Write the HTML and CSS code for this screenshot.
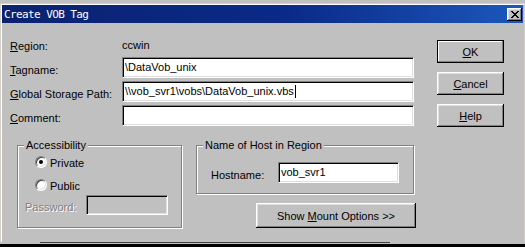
FILE: index.html
```html
<!DOCTYPE html>
<html lang="en">
<head>
    <meta charset="UTF-8">
    <meta name="viewport" content="width=device-width, initial-scale=1.0">
    <title>Create VOB Tag</title>
    <link rel="stylesheet" href="styles.css">
</head>
<body>
    <div class="window">
        <div class="titlebar">
            <span class="title">Create VOB Tag</span>
            <span class="close">
                <svg width="8" height="7" viewBox="0 0 8 7">
                    <path d="M0 0h2v1h1v1h2v-1h1v-1h2v1h-1v1h-1v1h-1v1h1v1h1v1h1v1h-2v-1h-1v-1h-2v1h-1v1h-2v-1h1v-1h1v-1h1v-1h-1v-1h-1v-1h-1z" fill="#000"/>
                </svg>
            </span>
        </div>

        <div class="content">
            <div class="main">
                <div class="fields">
                    <div class="label"><u>R</u>egion:</div>
                    <div class="value">ccwin</div>

                    <div class="label"><u>T</u>agname:</div>
                    <div class="field">\DataVob_unix</div>

                    <div class="label"><u>G</u>lobal Storage Path:</div>
                    <div class="field">\\vob_svr1\vobs\DataVob_unix.vbs<span class="caret"></span></div>

                    <div class="label"><u>C</u>omment:</div>
                    <div class="field"></div>
                </div>

                <div class="groups">
                    <div class="group access">
                        <div class="legend">Accessibility</div>
                        <div class="radio-row first">
                            <span class="radio checked"></span>
                            <span>Private</span>
                        </div>
                        <div class="radio-row">
                            <span class="radio"></span>
                            <span>Public</span>
                        </div>
                        <div class="password-row">
                            <span class="disabled-label">Password:</span>
                            <span class="field disabled"></span>
                        </div>
                    </div>

                    <div class="right-col">
                        <div class="group host">
                            <div class="legend">Name of Host in Region</div>
                            <div class="host-row">
                                <span class="host-label">Hostname:</span>
                                <span class="field host-field">vob_svr1</span>
                            </div>
                        </div>
                        <button class="btn mount">Show <u>M</u>ount Options &gt;&gt;</button>
                    </div>
                </div>
            </div>

            <div class="actions">
                <button class="btn default"><u>O</u>K</button>
                <button class="btn"><u>C</u>ancel</button>
                <button class="btn"><u>H</u>elp</button>
            </div>
        </div>
    </div>
    <div class="edge-line"></div>
    <div class="taskbar"></div>
</body>
</html>
```

FILE: styles.css
```css
* {
    margin: 0;
    padding: 0;
    box-sizing: border-box;
}

body {
    width: 525px;
    height: 247px;
    overflow: hidden;
    background-color: #c0c0c0;
    color: #000;
    font-family: "Liberation Sans", Arial, sans-serif;
    font-size: 11px;
}

u {
    text-decoration: underline;
    text-underline-offset: 1px;
}

.window {
    margin-top: 3px;
    height: 239px;
    border: 1px solid #d4d0c8;
    border-bottom: none;
    padding: 1px 1px 0 1px;
    box-shadow: inset 1px 1px #fff;
    background-color: #c0c0c0;
}

.titlebar {
    height: 18px;
    display: flex;
    align-items: center;
    justify-content: space-between;
    padding: 0 1px 0 2px;
    background: linear-gradient(to right, #0a2270, #0a2a88 55%, #1c58bc);
    color: #fff;
}

.title {
    font-family: "DejaVu Sans Mono", monospace;
    font-size: 11px;
    letter-spacing: -0.6px;
    padding-top: 1px;
}

.close {
    width: 15px;
    height: 13px;
    display: flex;
    align-items: center;
    justify-content: center;
    background-color: #c0c0c0;
    box-shadow: inset -1px -1px #000, inset 1px 1px #fff, inset -2px -2px #808080, inset 2px 2px #dfdfdf;
}

.content {
    display: flex;
    padding: 10px 0 0 8px;
}

.main {
    width: 406px;
}

.fields {
    display: grid;
    grid-template-columns: 112px 292px;
    grid-auto-rows: 21px;
    row-gap: 3px;
}

.label,
.value {
    padding-top: 7px;
    line-height: 13px;
    white-space: nowrap;
}

.value {
    padding-top: 6px;
}

.field {
    display: block;
    height: 21px;
    background-color: #fff;
    border: 1px solid;
    border-color: #808080 #fff #fff #808080;
    box-shadow: inset 1px 1px #000, inset -1px -1px #dfdfdf;
    padding: 0 2px;
    line-height: 19px;
    white-space: nowrap;
    overflow: hidden;
}

.caret {
    display: inline-block;
    width: 1px;
    height: 13px;
    margin-left: 1px;
    background-color: #000;
    vertical-align: -3px;
}

.groups {
    display: flex;
    align-items: flex-start;
    gap: 14px;
    margin-top: 19px;
    padding-left: 7px;
}

.group {
    border: 1px solid #808080;
    box-shadow: inset 1px 1px #fff, 1px 1px #fff;
}

.legend {
    width: max-content;
    margin: -7px 0 0 6px;
    padding: 0 2px;
    line-height: 13px;
    background-color: #c0c0c0;
}

.access {
    width: 166px;
    height: 83px;
}

.radio-row {
    display: flex;
    align-items: center;
    gap: 3px;
    height: 16px;
    margin: 7px 0 0 17px;
}

.radio-row.first {
    margin-top: 2px;
}

.radio-row span + span {
    padding-top: 1px;
}

.radio {
    width: 12px;
    height: 12px;
    display: flex;
    align-items: center;
    justify-content: center;
    border-radius: 50%;
    background-color: #fff;
    border: 1px solid;
    border-color: #808080 #fff #fff #808080;
    box-shadow: inset 1px 1px #404040, inset -1px -1px #dfdfdf;
}

.radio.checked::after {
    content: "";
    width: 4px;
    height: 4px;
    border-radius: 50%;
    background-color: #000;
}

.password-row {
    display: flex;
    align-items: center;
    margin: 2px 0 0 7px;
}

.disabled-label {
    width: 61px;
    padding-top: 3px;
    color: #808080;
    text-shadow: 1px 1px #fff;
}

.field.disabled {
    width: 82px;
    height: 20px;
    background-color: #c0c0c0;
}

.right-col {
    width: 220px;
    display: flex;
    flex-direction: column;
}

.host {
    width: 218px;
    height: 49px;
}

.host-row {
    display: flex;
    align-items: center;
    margin: 10px 0 0 14px;
}

.host-label {
    width: 67px;
    padding-top: 5px;
}

.host-field {
    width: 121px;
}

.btn {
    width: 67px;
    height: 23px;
    border: none;
    background-color: #c0c0c0;
    color: #000;
    font: inherit;
    box-shadow: inset -1px -1px #000, inset 1px 1px #fff, inset -2px -2px #808080, inset 2px 2px #dfdfdf;
}

.btn.default {
    box-shadow: inset 0 0 0 1px #000, inset -2px -2px #808080, inset 2px 2px #fff;
}

.mount {
    width: 160px;
    height: 25px;
    margin: 9px 0 0 60px;
}

.actions {
    display: flex;
    flex-direction: column;
    gap: 9px;
    margin: 7px 0 0 21px;
}

.edge-line {
    width: 350px;
    height: 1px;
    margin-left: 40px;
    background-color: #404040;
}

.taskbar {
    height: 3px;
    margin-top: 1px;
    background-color: #000;
}
```
